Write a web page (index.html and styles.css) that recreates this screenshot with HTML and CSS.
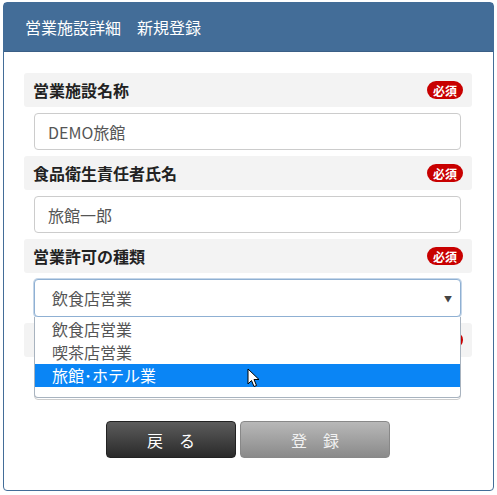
FILE: index.html
```html
<!DOCTYPE html>
<html lang="ja">
<head>
    <meta charset="UTF-8">
    <title>営業施設詳細 新規登録</title>
    <link rel="stylesheet" href="styles.css">
</head>
<body>
    <div class="panel">
        <div class="panel-head">営業施設詳細　新規登録</div>
        <div class="panel-body">
            <div class="field">
                <div class="field-label">営業施設名称<span class="badge">必須</span></div>
                <div class="field-input">DEMO旅館</div>
            </div>
            <div class="field">
                <div class="field-label">食品衛生責任者氏名<span class="badge">必須</span></div>
                <div class="field-input">旅館一郎</div>
            </div>
            <div class="field">
                <div class="field-label">営業許可の種類<span class="badge">必須</span></div>
                <div class="select-wrap">
                    <div class="field-select">飲食店営業<span class="arrow">▼</span></div>
                    <ul class="select-list">
                        <li>飲食店営業</li>
                        <li>喫茶店営業</li>
                        <li class="hover">旅館･ホテル業
                            <svg class="pointer" width="14" height="20" viewBox="0 0 14 20">
                                <path d="M1 1 L1 16 L4.5 12.5 L7 18.5 L9.5 17.5 L7 11.5 L12 11.5 Z" fill="#fff" stroke="#000" stroke-width="1"/>
                            </svg>
                        </li>
                    </ul>
                </div>
            </div>
            <div class="field">
                <div class="field-label"><span></span><span class="badge">必須</span></div>
                <div class="field-input"></div>
            </div>
            <div class="actions">
                <button class="btn btn-back">戻　る</button>
                <button class="btn btn-save">登　録</button>
            </div>
        </div>
    </div>
</body>
</html>
```

FILE: styles.css
```css
body {
    margin: 0;
    padding: 2px 3px;
    background: #fff;
    font-family: "Noto Sans CJK JP", "Noto Sans", sans-serif;
    font-size: 16px;
    color: #333;
}

.panel {
    border: 1px solid #436d98;
    border-radius: 4px;
}

.panel-head {
    height: 49px;
    padding-left: 21px;
    display: flex;
    align-items: center;
    background-color: #436d98;
    border-bottom: 1px solid #3b5f86;
    box-sizing: border-box;
    color: #fff;
    font-size: 16px;
}

.panel-body {
    padding: 21px 21px 32px 20px;
}

.field {
    margin-bottom: 6px;
}

.field-label {
    height: 34px;
    padding: 0 9px;
    display: flex;
    align-items: center;
    justify-content: space-between;
    background-color: #f3f3f3;
    border-radius: 3px;
    font-weight: bold;
    color: #222;
}

.badge {
    height: 18px;
    padding: 0 6px;
    display: flex;
    align-items: center;
    background-color: #c80000;
    border-radius: 9px;
    color: #fff;
    font-size: 12px;
    font-weight: bold;
}

.field-input,
.field-select {
    height: 37px;
    margin: 6px 11px 0 10px;
    padding: 0 13px;
    display: flex;
    align-items: center;
    box-sizing: border-box;
    border: 1px solid #ccc;
    border-radius: 4px;
    background: #fff;
    color: #555;
}

.select-wrap {
    position: relative;
}

.field-select {
    height: 38px;
    padding: 0 8px 0 17px;
    justify-content: space-between;
    border-color: #8fb0d3;
    box-shadow: 0 0 0 1px #c5d6e8;
}

.arrow {
    font-size: 8px;
    color: #444;
}

.select-list {
    position: absolute;
    top: 100%;
    left: 10px;
    right: 11px;
    z-index: 10;
    height: 81px;
    margin: 0;
    padding: 1px 0 0;
    list-style: none;
    box-sizing: border-box;
    background: #fff;
    border: 1px solid #a8b3bf;
    border-top: none;
    border-radius: 0 0 4px 4px;
}

.select-list li {
    position: relative;
    height: 23px;
    padding-left: 17px;
    line-height: 23px;
    color: #555;
}

.select-list li.hover {
    background-color: #0a85f5;
    color: #fff;
}

.pointer {
    position: absolute;
    left: 212px;
    top: 4px;
}

.actions {
    margin-top: 21px;
    display: flex;
    justify-content: center;
    gap: 4px;
}

.btn {
    height: 37px;
    border-radius: 4px;
    font-family: "Noto Sans CJK JP", sans-serif;
    font-size: 16px;
    cursor: pointer;
}

.btn-back {
    width: 130px;
    border: 1px solid #222;
    background: linear-gradient(#5c5c5c, #2a2a2a);
    color: #fff;
}

.btn-save {
    width: 150px;
    border: 1px solid #888;
    background: linear-gradient(#b8b8b8, #8a8a8a);
    color: #f2f2f2;
}
```
